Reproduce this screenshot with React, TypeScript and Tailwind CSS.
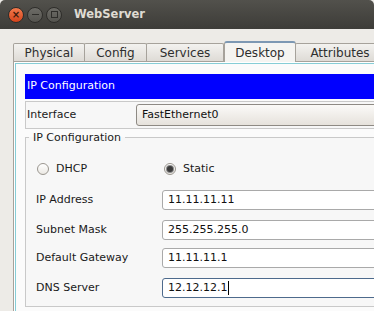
import React from "react";

const tabs = [
  { label: "Physical", w: "w-[72px]" },
  { label: "Config", w: "w-[63px]" },
  { label: "Services", w: "w-[78px]" },
  { label: "Desktop", w: "w-[72px]", active: true },
  { label: "Attributes", w: "w-[90px]" },
];

function TitleButton({ kind }: { kind: "close" | "min" | "max" }) {
  if (kind === "close") {
    return (
      <div className="w-[16px] h-[16px] rounded-full border border-[#2e2d2a] bg-gradient-to-b from-[#f37a4c] to-[#d4431a] flex items-center justify-center">
        <span className="text-[10px] leading-none text-[#3a1a0c] font-bold">×</span>
      </div>
    );
  }
  return (
    <div className="w-[16px] h-[16px] rounded-full border border-[#2e2d2a] bg-gradient-to-b from-[#6d6c67] to-[#55544f] flex items-center justify-center">
      {kind === "min" ? (
        <div className="w-[7px] h-[1.5px] bg-[#2e2d2a]" />
      ) : (
        <div className="w-[7px] h-[7px] border border-[#2e2d2a]" />
      )}
    </div>
  );
}

function Radio({ checked, label }: { checked?: boolean; label: string }) {
  return (
    <div className="flex items-center">
      <div className="w-[12px] h-[12px] rounded-full border border-[#9a968f] bg-gradient-to-b from-[#ffffff] to-[#ebe8e3] flex items-center justify-center">
        {checked && <div className="w-[6px] h-[6px] rounded-full bg-[#3b3b3b] ring-1 ring-[#8a8a8a]" />}
      </div>
      <span className="ml-[7px] text-[11px] leading-[14px] text-[#1a1a1a]">{label}</span>
    </div>
  );
}

function Field({ label, value, focused, mt }: { label: string; value: string; focused?: boolean; mt: string }) {
  return (
    <div className={`flex items-center ${mt}`}>
      <div className="w-[136px] pl-[10px] text-[11px] text-[#1a1a1a]">{label}</div>
      <div
        className={`h-[20px] w-[240px] rounded-l-[3px] bg-white flex items-center pl-[5px] text-[11px] text-[#111] border ${
          focused ? "border-[#4d6a8c]" : "border-[#a9a9a9]"
        }`}
      >
        {value}
        {focused && <span className="inline-block w-px h-[14px] bg-black ml-px" />}
      </div>
    </div>
  );
}

export default function App() {
  return (
    <div className="w-[374px] h-[311px] overflow-hidden bg-[#edebe7] font-['DejaVu_Sans',sans-serif]">
      <div className="h-[29px] rounded-t-[5px] bg-gradient-to-b from-[#52514c] to-[#3d3c38] flex items-center pl-[8px]">
        <div className="flex gap-[3px]">
          <TitleButton kind="close" />
          <TitleButton kind="min" />
          <TitleButton kind="max" />
        </div>
        <span className="ml-[12px] text-[11.5px] font-bold text-[#dfdbd2]">WebServer</span>
      </div>

      <div className="w-[440px]">
        <div className="flex items-end ml-[13px] mt-[12px] h-[20px]">
          {tabs.map((t) =>
            t.active ? (
              <div
                key={t.label}
                className={`${t.w} h-[21px] -mb-px relative z-10 border border-b-0 border-[#a6a29b] border-t-2 border-t-[#7d98b3] rounded-t-[3px] bg-[#f5f4f1] flex items-center justify-center text-[12px] text-[#2e2e2e]`}
              >
                {t.label}
              </div>
            ) : (
              <div
                key={t.label}
                className={`${t.w} h-[18px] border border-b-0 border-[#a6a29b] -ml-px first:ml-0 rounded-t-[2px] bg-gradient-to-b from-[#f3f2ef] to-[#dedbd6] flex items-center justify-center text-[12px] text-[#2e2e2e]`}
              >
                {t.label}
              </div>
            )
          )}
        </div>

        <div className="ml-[13px] border-l border-t border-[#a6a29b] bg-white pl-px pt-px h-[260px]">
          <div className="border-l border-t border-[#86cdd6] bg-[#fbfbfb] h-full pl-[9px] pt-[10px]">
            <div className="h-[25px] bg-[#0000ff] flex items-center pl-[2px] text-[11px] text-white">
              IP Configuration
            </div>

            <div className="mt-[2px] h-[28px] border-l border-t border-b border-[#c9c9c9] bg-[#f7f7f7] flex items-center">
              <div className="w-[110px] pl-px text-[11px] text-[#1a1a1a]">Interface</div>
              <div className="h-[22px] flex-1 rounded-l-[3px] border border-[#8e8a84] bg-gradient-to-b from-[#fbfaf8] to-[#e6e2dc] flex items-center pl-[5px] text-[11px] text-[#111]">
                FastEthernet0
              </div>
            </div>

            <fieldset className="mt-[2px] border-l border-t border-b border-[#c9c9c9] bg-[#f7f7f7] pb-[8px]">
              <legend className="ml-[3px] px-[4px] text-[11px] leading-[13px] text-[#1a1a1a]">IP Configuration</legend>
              <div className="flex items-center mt-[18px] pl-[11px]">
                <div className="w-[127px]">
                  <Radio label="DHCP" />
                </div>
                <Radio checked label="Static" />
              </div>
              <Field label="IP Address" value="11.11.11.11" mt="mt-[14px]" />
              <Field label="Subnet Mask" value="255.255.255.0" mt="mt-[10px]" />
              <Field label="Default Gateway" value="11.11.11.1" mt="mt-[8px]" />
              <Field label="DNS Server" value="12.12.12.1" focused mt="mt-[10px]" />
            </fieldset>
          </div>
        </div>
      </div>
    </div>
  );
}
